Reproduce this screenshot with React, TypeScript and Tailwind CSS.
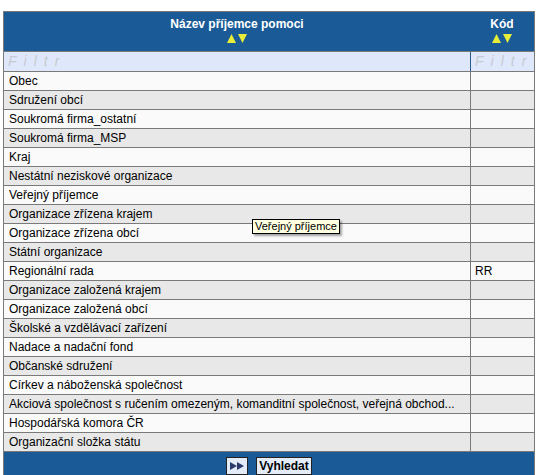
import React from "react";

const rows: [string, string][] = [
  ["Obec", ""],
  ["Sdružení obcí", ""],
  ["Soukromá firma_ostatní", ""],
  ["Soukromá firma_MSP", ""],
  ["Kraj", ""],
  ["Nestátní neziskové organizace", ""],
  ["Veřejný příjemce", ""],
  ["Organizace zřízena krajem", ""],
  ["Organizace zřízena obcí", ""],
  ["Státní organizace", ""],
  ["Regionální rada", "RR"],
  ["Organizace založená krajem", ""],
  ["Organizace založená obcí", ""],
  ["Školské a vzdělávací zařízení", ""],
  ["Nadace a nadační fond", ""],
  ["Občanské sdružení", ""],
  ["Církev a náboženská společnost", ""],
  ["Akciová společnost s ručením omezeným, komanditní společnost, veřejná obchod...", ""],
  ["Hospodářská komora ČR", ""],
  ["Organizační složka státu", ""],
];

function Arrows() {
  return (
    <svg width="20" height="9" viewBox="0 0 20 9" className="mx-auto mt-[3px] block">
      <polygon points="0,9 4.5,0 9,9" fill="#e6ee3a" />
      <polygon points="11,0 20,0 15.5,9" fill="#e6ee3a" />
    </svg>
  );
}

export default function App() {
  return (
    <div
      className="relative w-[554px] h-[475px] overflow-hidden bg-white"
      style={{ fontFamily: '"Liberation Sans", Arial, sans-serif' }}
    >
      <div className="pt-[11px] pl-[3px]">
        <div className="w-[532px] border-x border-t border-[#7a7a7a]">
          {/* header */}
          <div className="flex h-[39px] bg-[#1a5a96] text-white text-[12px] font-bold">
            <div className="w-[466px] pt-[5px] text-center">
              <div className="leading-[14px]">Název příjemce pomoci</div>
              <Arrows />
            </div>
            <div className="flex-1 pt-[5px] text-center">
              <div className="leading-[14px]">Kód</div>
              <Arrows />
            </div>
          </div>
          {/* filter */}
          <div className="flex h-[21px] bg-[#dfe8fb] border-t border-[#7a7a7a] border-b text-[14px] italic text-[#c6cad2]">
            <div className="w-[466px] pl-[4px] leading-[19px] tracking-[7px]">Filtr</div>
            <div className="flex-1 border-l border-[#2a5a8a] pl-[4px] leading-[19px] tracking-[7px] overflow-hidden whitespace-nowrap">
              Filtr
            </div>
          </div>
          {rows.map(([name, code], i) => (
            <div
              key={i}
              className={`flex h-[19px] border-b border-[#7a7a7a] text-[12px] text-black ${
                i % 2 === 0 ? "bg-[#fafafa]" : "bg-[#e8e8e8]"
              }`}
            >
              <div className="w-[466px] pl-[5px] leading-[18px] whitespace-nowrap overflow-hidden">{name}</div>
              <div className="flex-1 border-l border-[#7a7a7a] pl-[4px] leading-[18px]">{code}</div>
            </div>
          ))}
          {/* footer */}
          <div className="flex h-[30px] items-start justify-center gap-[8px] bg-[#1a5a96] pt-[5px]">
            <button className="flex h-[18px] w-[22px] items-center justify-center border border-[#222] bg-[#e4ecfa]">
              <svg width="14" height="8" viewBox="0 0 14 8">
                <polygon points="0,0 7,4 0,8" fill="#2b3a6a" />
                <polygon points="7,0 14,4 7,8" fill="#2b3a6a" />
              </svg>
            </button>
            <button className="h-[18px] border border-[#222] bg-[#e4ecfa] px-[2px] text-[12px] font-bold leading-[15px] text-black">
              Vyhledat
            </button>
          </div>
        </div>
      </div>
      {/* tooltip */}
      <div className="absolute left-[252px] top-[219px] border border-black bg-[#ffffe1] px-[2px] text-[11px] leading-[13px] text-black shadow-[2px_2px_2px_rgba(0,0,0,0.35)]">
        Veřejný příjemce
      </div>
    </div>
  );
}
